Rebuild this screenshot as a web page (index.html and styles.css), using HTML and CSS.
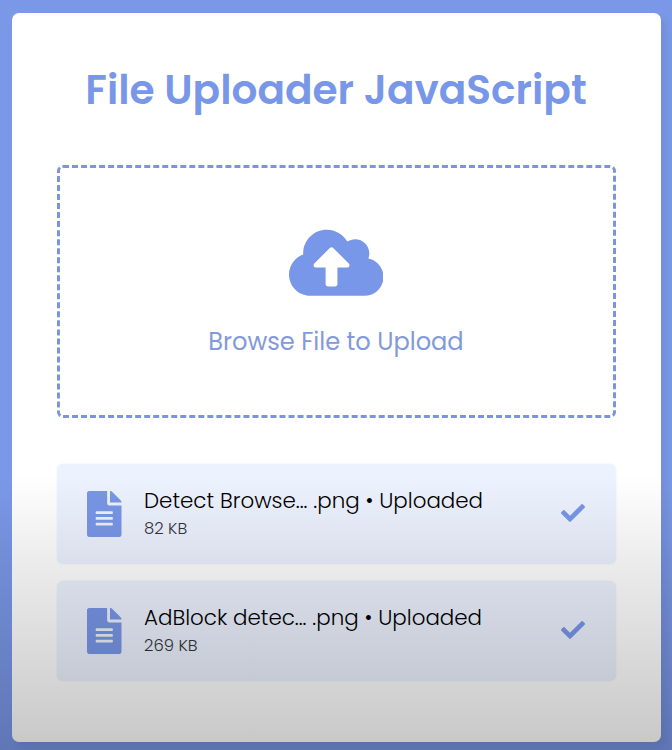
FILE: index.html
```html
<!DOCTYPE html>
<html lang="en">
<head>
<meta charset="utf-8">
<title>File Uploader JavaScript</title>
<link rel="stylesheet" href="styles.css">
</head>
<body>
<main class="wrapper">
  <h1 class="title">File Uploader JavaScript</h1>
  <form class="dropzone">
    <svg class="cloud" viewBox="0 0 640 512"><path d="M537.600 226.600c4.100-10.700 6.400-22.400 6.400-34.600 0-53-43-96-96-96-19.700 0-38.100 6-53.300 16.200C367 64.200 315.300 32 256 32c-88.400 0-160 71.600-160 160 0 2.700.1 5.400.2 8.100C40.200 219.800 0 273.200 0 336c0 79.500 64.500 144 144 144h368c70.700 0 128-57.300 128-128 0-61.900-44-113.600-102.400-125.400zM393.400 288H328v112c0 8.800-7.200 16-16 16h-48c-8.800 0-16-7.200-16-16V288h-65.400c-14.300 0-21.400-17.200-11.300-27.300l105.400-105.400c6.200-6.200 16.400-6.200 22.600 0l105.400 105.400c10.100 10.100 2.900 27.300-11.300 27.300z"/></svg>
    <p class="browse">Browse File to Upload</p>
  </form>
  <section class="uploads">
    <div class="row">
      <svg class="file" viewBox="0 0 384 512"><path d="M224 136V0H24C10.700 0 0 10.700 0 24v464c0 13.300 10.700 24 24 24h336c13.300 0 24-10.700 24-24V160H248c-13.200 0-24-10.800-24-24zm64 236c0 6.600-5.400 12-12 12H108c-6.600 0-12-5.400-12-12v-8c0-6.600 5.400-12 12-12h168c6.600 0 12 5.400 12 12v8zm0-64c0 6.600-5.400 12-12 12H108c-6.600 0-12-5.400-12-12v-8c0-6.600 5.400-12 12-12h168c6.600 0 12 5.400 12 12v8zm0-72v8c0 6.600-5.400 12-12 12H108c-6.600 0-12-5.400-12-12v-8c0-6.600 5.400-12 12-12h168c6.600 0 12 5.400 12 12zm96-114.100v6.100H256V0h6.100c6.400 0 12.500 2.500 17 7l97.900 98c4.500 4.500 7 10.600 7 16.900z"/></svg>
      <div class="details"><span class="name">Detect Browse... .png • Uploaded</span><span class="size">82 KB</span></div>
      <svg class="check" viewBox="0 0 512 512"><path d="M173.900 439.400l-166.400-166.400c-10-10-10-26.200 0-36.200l36.200-36.200c10-10 26.200-10 36.200 0L192 312.700 432.100 72.600c10-10 26.200-10 36.200 0l36.200 36.200c10 10 10 26.200 0 36.200l-294.400 294.400c-10 10-26.200 10-36.200 0z"/></svg>
    </div>
    <div class="row">
      <svg class="file" viewBox="0 0 384 512"><path d="M224 136V0H24C10.700 0 0 10.700 0 24v464c0 13.300 10.700 24 24 24h336c13.300 0 24-10.700 24-24V160H248c-13.200 0-24-10.800-24-24zm64 236c0 6.600-5.400 12-12 12H108c-6.600 0-12-5.400-12-12v-8c0-6.600 5.400-12 12-12h168c6.600 0 12 5.400 12 12v8zm0-64c0 6.600-5.400 12-12 12H108c-6.600 0-12-5.400-12-12v-8c0-6.600 5.400-12 12-12h168c6.600 0 12 5.400 12 12v8zm0-72v8c0 6.600-5.400 12-12 12H108c-6.600 0-12-5.400-12-12v-8c0-6.600 5.400-12 12-12h168c6.600 0 12 5.400 12 12zm96-114.100v6.100H256V0h6.100c6.400 0 12.500 2.500 17 7l97.900 98c4.500 4.500 7 10.600 7 16.900z"/></svg>
      <div class="details"><span class="name">AdBlock detec... .png • Uploaded</span><span class="size">269 KB</span></div>
      <svg class="check" viewBox="0 0 512 512"><path d="M173.900 439.400l-166.400-166.400c-10-10-10-26.200 0-36.200l36.200-36.200c10-10 26.200-10 36.200 0L192 312.700 432.100 72.600c10-10 26.200-10 36.200 0l36.200 36.200c10 10 10 26.200 0 36.200l-294.400 294.400c-10 10-26.200 10-36.200 0z"/></svg>
    </div>
  </section>
</main>
<div class="shade"></div>
</body>
</html>
```
FILE: styles.css
```css
* { box-sizing: border-box; margin: 0; padding: 0; }
body {
  height: 750px;
  padding: 13px 11px 8px 12px;
  overflow: hidden;
  background: #7b98e8;
  font-family: Poppins, Inter, sans-serif;
}
svg { display: block; flex: none; fill: #7997e8; }
.wrapper {
  height: 729px;
  padding: 47px 45px 0;
  border-radius: 7px;
  background: #fff;
  box-shadow: 5px 5px 9px rgba(0, 0, 0, .07);
}
.title {
  height: 60px;
  margin-right: 1px;
  line-height: 60px;
  text-align: center;
  white-space: nowrap;
  font-size: 40.660px;
  font-weight: 600;
  color: #7997e8;
}
.dropzone {
  display: flex;
  flex-direction: column;
  align-items: center;
  height: 253px;
  margin-top: 45px;
  padding: 57px 1px 0 0;
  border: 3px dashed #7c94df;
  border-radius: 6px;
}
.cloud { width: 94.500px; height: 75.600px; }
.browse {
  margin-top: 22.400px;
  line-height: 38px;
  white-space: nowrap;
  font-size: 24.100px;
  color: #8299dc;
}
.uploads { display: grid; gap: 17px; margin-top: 46px; }
.row {
  display: flex;
  align-items: center;
  height: 100px;
  padding: 0 31px 0 30px;
  border-radius: 6px;
  background: #edf2ff;
  box-shadow: 0 0 2px #e9edfa;
}
.file { width: 34.500px; height: 46px; margin-top: -1px; }
.details { display: flex; flex-direction: column; flex: 1; margin: -3px 0 0 22.500px; white-space: nowrap; }
.name { line-height: 32px; font-size: 21.400px; font-weight: 300; color: #000; }
.size { line-height: 23px; font-size: 16.400px; font-weight: 300; color: #30343c; }
.check { width: 24px; height: 24px; margin-top: -2px; }
.shade {
  position: absolute;
  inset: 0;
  background: linear-gradient(transparent 475px, rgba(0, 0, 0, .075) 560px, rgba(0, 0, 0, .22) 750px);
}
```
